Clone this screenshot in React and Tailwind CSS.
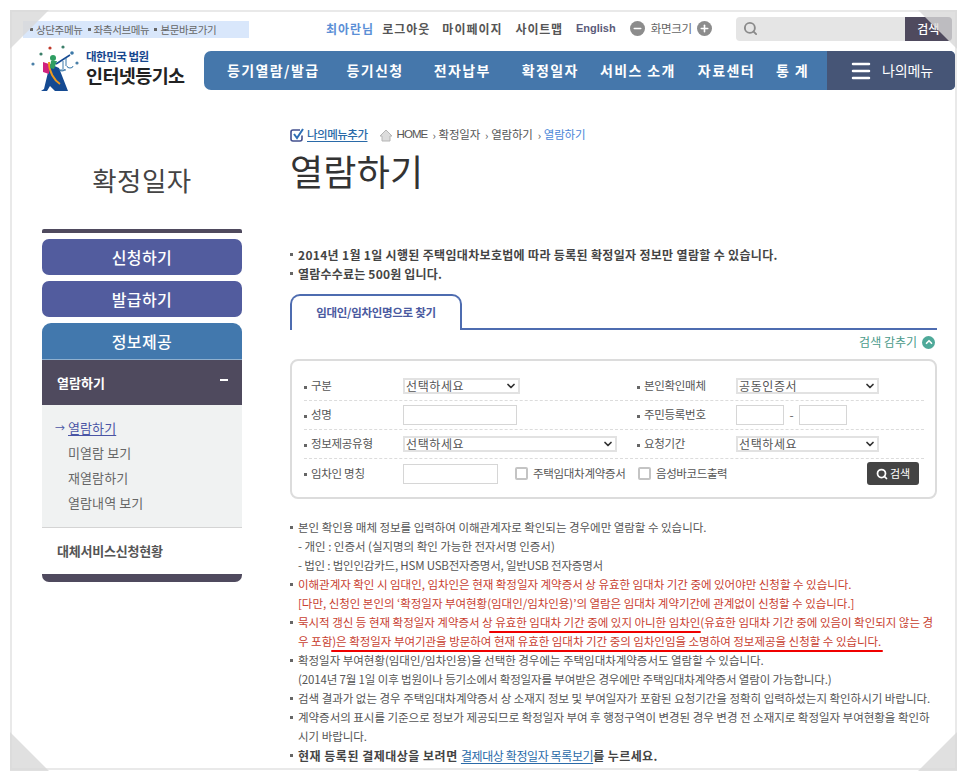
import { ChevronDown, ChevronUp, Menu, Minus, Plus, Search } from 'lucide-react'

const FONT = "font-['Noto_Sans_CJK_KR','Noto_Sans',sans-serif]"

const NAV = [
  { label: '등기열람/발급', cls: 'ml-[23px]' },
  { label: '등기신청', cls: 'ml-[27px]' },
  { label: '전자납부', cls: 'ml-[30px]' },
  { label: '확정일자', cls: 'ml-[31px]' },
  { label: '서비스 소개', cls: 'ml-[21px]' },
  { label: '자료센터', cls: 'ml-[22px]' },
  { label: '통 계', cls: 'ml-[21px]' },
]

function Corner({ points, cls }) {
  return (
    <svg className={'absolute w-[39px] h-[39px] pointer-events-none ' + cls} viewBox="0 0 39 39">
      <polygon points={points} fill="#d8d8d8" fillOpacity="0.8" />
    </svg>
  )
}

function Logo() {
  return (
    <svg width="56" height="50" viewBox="0 0 56 50" className="shrink-0">
      <g fill="#4a7fa8">
        <circle cx="3" cy="20" r="1.6" />
        <circle cx="11" cy="10" r="1.6" fill="#3c7f6a" />
        <circle cx="20" cy="4" r="1.6" fill="#c0392b" />
        <circle cx="33" cy="3" r="1.6" fill="#3c7f6a" />
        <circle cx="42" cy="9" r="1.8" fill="#3b78a8" />
        <circle cx="47" cy="19" r="1.6" />
      </g>
      <path d="M20 20 L14 45 L11 47 L17 47 L20 42 L25 47 L38 47 L29 24 Z" fill="#154a92" />
      <path d="M13 18 L19 20 L19 30 L13 28 Z" fill="#d1217e" />
      <path d="M19 18 C19 28 24 36 30 40" stroke="#ef9a1e" strokeWidth="2" fill="none" />
      <circle cx="23" cy="14" r="3" fill="#2f9e62" />
      <path d="M21 17 L27 17 L24 25 L20 24 Z" fill="#2f9e62" />
      <path d="M26 20 L40 11" stroke="#154a92" strokeWidth="1.5" />
      <path d="M33 17 v8 M30 26 h6 M36 14 v8" stroke="#3b78a8" strokeWidth="1" />
      <path d="M29 25 a3 2 0 0 0 6 0 M37 22 a3 2 0 0 0 6 0" stroke="#3b78a8" strokeWidth="1" fill="none" />
    </svg>
  )
}

function Field({ label, children, wide }) {
  return (
    <div className={'flex items-center ' + (wide ? 'w-[333px]' : 'w-[286px]')}>
      <span className="w-[99px] shrink-0 text-[11.5px] text-[#555] tracking-[-0.3px] whitespace-nowrap">
        <span className="inline-block w-[3px] h-[3px] bg-[#666] align-middle mr-[4px]" />
        {label}
      </span>
      {children}
    </div>
  )
}

function Picker({ cls, value }) {
  return (
    <div className={'h-[16px] border-2 border-[#e2e2e2] bg-white flex items-center justify-between text-[12px] leading-[12px] tracking-[0.6px] text-[#555] pl-[1px] pr-[1px] ' + cls}>
      <span>{value}</span>
      <ChevronDown size={12} strokeWidth={3.5} color="#333" />
    </div>
  )
}

function Box({ cls }) {
  return <input className={'h-[20px] border border-[#d6d6d6] bg-white outline-none ' + cls} />
}

function Note({ color, bullet, children }) {
  return (
    <div className={'relative h-[19px] leading-[19px] pl-[8px] whitespace-nowrap ' + (color || '')}>
      {bullet && <span className="absolute left-0 top-[8px] w-[3px] h-[3px] bg-[#666]" />}
      {children}
    </div>
  )
}

function RedLine({ children, cls }) {
  return (
    <span className="relative">
      {children}
      <span className={'absolute bottom-[-3px] h-[2.5px] rounded-full bg-[#f00000] ' + cls} />
    </span>
  )
}

function Crumb({ children, cls }) {
  return <span className={'ml-[5px] text-[11px] ' + (cls || '')}>{children}</span>
}

export default function App() {
  return (
    <div className={'relative w-[966px] h-[780px] overflow-hidden bg-white ' + FONT}>
      <div className="ml-[10px] mt-[10px] w-[947px] h-[760px] border-2 border-[#e9e9e9] overflow-hidden">
        {/* Header */}
        <div className="flex">
          <div className="w-[192px] shrink-0">
            <div className="ml-[11px] mt-[9px] w-[226px] h-[17px] bg-[#d9e7fb] flex items-center text-[10.5px] text-[#666] tracking-[-0.35px] pl-[7px] whitespace-nowrap">
              <span className="w-[3px] h-[3px] bg-[#666] mr-[3px]" />상단주메뉴
              <span className="w-[3px] h-[3px] bg-[#666] ml-[5px] mr-[3px]" />좌측서브메뉴
              <span className="w-[3px] h-[3px] bg-[#666] ml-[5px] mr-[3px]" />본문바로가기
            </div>
            <div className="flex items-start ml-[18px] mt-[6px]">
              <Logo />
              <div className="pt-[5px] whitespace-nowrap">
                <div className="text-[11.5px] leading-[15px] font-bold text-[#17478f] tracking-[-0.5px]">대한민국 법원</div>
                <div className="text-[18.5px] leading-[23px] font-bold text-[#222] tracking-[-0.6px]">인터넷등기소</div>
              </div>
            </div>
          </div>
          <div className="flex-1 min-w-0">
            <div className="h-[39px] pb-[6px] flex items-center whitespace-nowrap">
              <span className="ml-[122px] text-[12px] font-bold text-[#5b8fd6] tracking-[1px]">최아란님</span>
              <span className="ml-[8px] text-[12px] font-bold text-[#555] tracking-[1px]">로그아웃</span>
              <span className="ml-[12px] text-[12px] font-bold text-[#555] tracking-[1px]">마이페이지</span>
              <span className="ml-[13px] text-[12px] font-bold text-[#555] tracking-[0.8px]">사이트맵</span>
              <span className="ml-[13px] text-[11px] font-bold text-[#5b5b7a] font-['Liberation_Sans']">English</span>
              <span className="ml-[14px] w-[15px] h-[15px] rounded-full bg-[#8c8c8c] flex items-center justify-center">
                <Minus size={11} strokeWidth={3.5} color="#fff" />
              </span>
              <span className="ml-[6px] text-[11.5px] text-[#666] tracking-[-0.3px]">화면크기</span>
              <span className="ml-[5px] w-[15px] h-[15px] rounded-full bg-[#8c8c8c] flex items-center justify-center">
                <Plus size={11} strokeWidth={3.5} color="#fff" />
              </span>
              <div className="ml-[24px] w-[216px] h-[24px] flex rounded-[4px] overflow-hidden bg-[#e5e5e5] shrink-0">
                <div className="flex-1 flex items-center pl-[7px]">
                  <Search size={15} strokeWidth={3} color="#8a8a8a" />
                </div>
                <div className="w-[47px] bg-[#4f4a5e] text-white text-[12px] font-medium flex items-center justify-center">검색</div>
              </div>
            </div>
            <div className="h-[39px] flex rounded-l-[7px] rounded-r-[5px] overflow-hidden bg-[#4577ab] text-white">
              <div className="flex-1 flex items-center whitespace-nowrap text-[14px] font-bold tracking-[1.4px]">
                {NAV.map(n => <span key={n.label} className={n.cls}>{n.label}</span>)}
              </div>
              <div className="w-[128px] bg-[#465576] flex items-center pl-[22px] gap-[9px] text-[14px] tracking-[-0.1px]">
                <Menu size={24} strokeWidth={2.5} />
                <span>나의메뉴</span>
              </div>
            </div>
          </div>
        </div>

        <div className="flex">
          {/* Sidebar */}
          <div className="ml-[30px] w-[200px] shrink-0">
            <div className="mt-[65px] h-[42px] text-center text-[26.5px] leading-[42px] text-[#444] tracking-[0.5px]">확정일자</div>
            <div className="mt-[28px] h-[4px] bg-[#4f4a5e] rounded-t-[2px]" />
            <div className="mt-[6px] h-[36px] rounded-[7px] bg-[#525c9e] text-white text-[16px] font-medium tracking-[0.4px] flex items-center justify-center">신청하기</div>
            <div className="mt-[6px] h-[36px] rounded-[7px] bg-[#525c9e] text-white text-[16px] font-medium tracking-[0.4px] flex items-center justify-center">발급하기</div>
            <div className="mt-[6px] h-[37px] rounded-t-[9px] bg-[#4278ad] border-b border-[#8fb0cf] text-white text-[16px] font-medium tracking-[0.4px] flex items-center justify-center">정보제공</div>
            <div className="h-[45px] bg-[#4f4a5e] text-white text-[13px] font-bold flex items-center justify-between pl-[15px] pr-[14px]">
              <span>열람하기</span>
              <span className="w-[8px] h-[2px] bg-white -mt-[6px]" />
            </div>
            <div className="h-[123px] bg-[#f0f2f2] border-b border-[#d4d4d4] pt-[10px] text-[13px] leading-[25px] text-[#666] pl-[26px] tracking-[0.1px]">
              <div className="relative">
                <span className="absolute left-[-13px] top-0 text-[10px] text-[#4a55a5]">→</span>
                <span className="text-[#4a55a5] underline underline-offset-2">열람하기</span>
              </div>
              <div>미열람 보기</div>
              <div>재열람하기</div>
              <div>열람내역 보기</div>
            </div>
            <div className="h-[46px] flex items-center pl-[15px] text-[13px] font-bold text-[#555] tracking-[-0.2px]">대체서비스신청현황</div>
            <div className="h-[8px] bg-[#4f4a5e] rounded-b-[7px]" />
          </div>

          {/* Main */}
          <div className="ml-[48px] w-[647px]">
            <div className="mt-[32px] flex items-center h-[18px] text-[11.5px] text-[#555] tracking-[-0.2px] whitespace-nowrap">
              <svg width="16" height="16" viewBox="0 0 16 16" className="-ml-[1px]">
                <path d="M13 8.5 V12 a2 2 0 0 1 -2 2 H4 a2 2 0 0 1 -2 -2 V5 a2 2 0 0 1 2 -2 H11" stroke="#43508f" strokeWidth="1.6" fill="none" />
                <path d="M5 7 L8 11 L14 2" stroke="#2f6fb5" strokeWidth="2" fill="none" />
              </svg>
              <span className="ml-[2px] font-medium text-[#2a6aa8] underline underline-offset-2 tracking-[-0.5px]">나의메뉴추가</span>
              <svg width="14" height="13" viewBox="0 0 14 13" className="ml-[12px]">
                <path d="M7 1 L13 7 H11 V12 H3 V7 H1 Z" fill="#dcdcdc" stroke="#b5b5b5" />
              </svg>
              <span className="ml-[3px] font-['Liberation_Sans'] text-[11.5px] tracking-[-0.9px]">HOME</span>
              <Crumb>›</Crumb>
              <span className="ml-[3px]">확정일자</span>
              <Crumb>›</Crumb>
              <span className="ml-[3px]">열람하기</span>
              <Crumb>›</Crumb>
              <span className="ml-[3px] text-[#4a86d8]">열람하기</span>
            </div>
            <div className="mt-[4px] h-[44px] text-[36px] leading-[44px] text-[#333] tracking-[0.2px]">열람하기</div>

            <div className="mt-[53px] text-[12px] font-bold leading-[19px] text-[#444] tracking-[0.2px] whitespace-nowrap">
              <div className="relative pl-[8px] tracking-[0.32px]">
                <span className="absolute left-0 top-[8px] w-[3px] h-[3px] bg-[#666]" />
                2014년 1월 1일 시행된 주택임대차보호법에 따라 등록된 확정일자 정보만 열람할 수 있습니다.
              </div>
              <div className="relative pl-[8px]">
                <span className="absolute left-0 top-[8px] w-[3px] h-[3px] bg-[#666]" />
                열람수수료는 500원 입니다.
              </div>
            </div>

            {/* Tab */}
            <div className="mt-[11px] h-[36px] border-b-2 border-[#4e6cb0]">
              <div className="w-[172px] h-[36px] bg-white border-2 border-b-0 border-[#4e6cb0] rounded-t-[10px] flex items-center justify-center text-[11.5px] font-bold text-[#4a5aa0] tracking-[-0.3px]">
                임대인/임차인명으로 찾기
              </div>
            </div>
            <div className="h-[24px] flex items-center justify-end gap-[5px] pr-[2px] text-[12px] text-[#4a9a8a]">
              <span>검색 감추기</span>
              <span className="w-[13px] h-[13px] rounded-full bg-[#4fa999] flex items-center justify-center">
                <ChevronUp size={10} strokeWidth={4} color="#fff" />
              </span>
            </div>

            {/* Search form */}
            <div className="mt-[5px] w-[647px] h-[140px] border-2 border-[#dcdcdc] rounded-[8px] pt-[11px] pl-[12px]">
              <div className="w-[620px] h-[29px] flex items-center border-b border-dashed border-[#dcdcdc]">
                <Field label="구분" wide><Picker value="선택하세요" cls="w-[117px]" /></Field>
                <Field label="본인확인매체"><Picker value="공동인증서" cls="w-[143px]" /></Field>
              </div>
              <div className="w-[620px] h-[29px] flex items-center border-b border-dashed border-[#dcdcdc]">
                <Field label="성명" wide><Box cls="w-[114px]" /></Field>
                <Field label="주민등록번호">
                  <Box cls="w-[48px]" />
                  <span className="w-[15px] text-center text-[12px] text-[#666]">-</span>
                  <Box cls="w-[48px]" />
                </Field>
              </div>
              <div className="w-[620px] h-[29px] flex items-center border-b border-dashed border-[#dcdcdc]">
                <Field label="정보제공유형" wide><Picker value="선택하세요" cls="w-[214px]" /></Field>
                <Field label="요청기간"><Picker value="선택하세요" cls="w-[143px]" /></Field>
              </div>
              <div className="w-[620px] h-[29px] flex items-center">
                <Field label="임차인 명칭" wide>
                  <Box cls="w-[95px]" />
                  <span className="ml-[17px] w-[13px] h-[13px] border-2 border-[#c4c4c4] rounded-[2px] shrink-0" />
                  <span className="ml-[5px] text-[11.5px] text-[#555] tracking-[-0.3px] whitespace-nowrap">주택임대차계약증서</span>
                </Field>
                <span className="ml-[1px] w-[13px] h-[13px] border-2 border-[#c4c4c4] rounded-[2px] shrink-0" />
                <span className="ml-[5px] text-[11.5px] text-[#555] tracking-[-0.4px] whitespace-nowrap">음성바코드출력</span>
                <span className="ml-auto mr-[5px] w-[52px] h-[23px] rounded-[3px] bg-[#444] text-white text-[11px] flex items-center justify-center gap-[2px]">
                  <Search size={12} strokeWidth={3.5} />
                  검색
                </span>
              </div>
            </div>

            {/* Notes */}
            <div className="mt-[19px] text-[11.5px] text-[#555] tracking-[-0.03px]">
              <Note bullet>본인 확인용 매체 정보를 입력하여 이해관계자로 확인되는 경우에만 열람할 수 있습니다.</Note>
              <Note>- 개인 : 인증서 (실지명의 확인 가능한 전자서명 인증서)</Note>
              <Note color="tracking-[-0.2px]">- 법인 : 법인인감카드, HSM USB전자증명서, 일반USB 전자증명서</Note>
              <Note bullet color="text-[#c8402f]">이해관계자 확인 시 임대인, 임차인은 현재 확정일자 계약증서 상 유효한 임대차 기간 중에 있어야만 신청할 수 있습니다.</Note>
              <Note color="text-[#c8402f]">[다만, 신청인 본인의 ‘확정일자 부여현황(임대인/임차인용)’의 열람은 임대차 계약기간에 관계없이 신청할 수 있습니다.]</Note>
              <Note bullet color="text-[#c8402f]">묵시적 갱신 등 현재 확정일자 계약증서 상 <RedLine cls="left-[-6px] right-[-1px]">유효한 임대차 기간 중에 있지 아니한 임차인</RedLine>(유효한 임대차 기간 중에 있음이 확인되지 않는 경</Note>
              <Note color="text-[#c8402f]">우 포함<RedLine cls="left-[-1px] right-[-2px]">)은 확정일자 부여기관을 방문하여 현재 유효한 임대차 기간 중의 임차인임을 소명하여 정보제공을 신청할 수 있습니다.</RedLine></Note>
              <Note bullet>확정일자 부여현황(임대인/임차인용)을 선택한 경우에는 주택임대차계약증서도 열람할 수 있습니다.</Note>
              <Note color="tracking-[-0.15px]">(2014년 7월 1일 이후 법원이나 등기소에서 확정일자를 부여받은 경우에만 주택임대차계약증서 열람이 가능합니다.)</Note>
              <Note bullet>검색 결과가 없는 경우 주택임대차계약증서 상 소재지 정보 및 부여일자가 포함된 요청기간을 정확히 입력하셨는지 확인하시기 바랍니다.</Note>
              <Note bullet>계약증서의 표시를 기준으로 정보가 제공되므로 확정일자 부여 후 행정구역이 변경된 경우 변경 전 소재지로 확정일자 부여현황을 확인하</Note>
              <Note>시기 바랍니다.</Note>
              <Note bullet>
                <span className="font-bold text-[#444] text-[12px] tracking-[0.5px]">현재 등록된 결제대상을 보려면 </span>
                <span className="text-[#2a6aa8] underline underline-offset-2 text-[12px] tracking-[-0.4px]">결제대상 확정일자 목록보기</span>
                <span className="font-bold text-[#444] text-[12px] tracking-[0.4px]">를 누르세요.</span>
              </Note>
            </div>
          </div>
        </div>
      </div>

      {/* Folded corners of the capture */}
      <Corner cls="left-[10px] top-[10px]" points="0,0 39,0 0,39" />
      <Corner cls="left-[918px] top-[10px]" points="0,0 39,0 39,39" />
      <Corner cls="left-[10px] top-[732px]" points="0,0 39,39 0,39" />
      <Corner cls="left-[918px] top-[732px]" points="39,0 39,39 0,39" />
    </div>
  )
}
